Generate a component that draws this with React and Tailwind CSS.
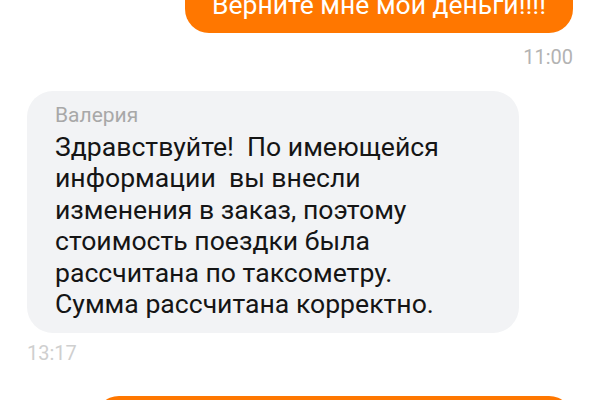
export default function App() {
  return (
    <div
      className="h-[400px] w-[600px] overflow-hidden bg-white px-[27px]"
      style={{ fontFamily: "Roboto, 'Noto Sans', sans-serif" }}
    >
      <div className="flex flex-col">
        <div className="-mt-[23px] self-end rounded-[24px] bg-[#ff7700] px-[27px] py-3 text-[26.5px] leading-[32px] text-white">
          Верните мне мои деньги!!!!
        </div>
        <div className="mt-3 self-end text-[20px] leading-[24px] text-[#b3b3b3]">11:00</div>

        <div className="mt-[22px] w-[492px] rounded-[26px] bg-[#f2f3f5] px-[28px] pt-[12px] pb-[13px]">
          <div className="text-[21px] leading-[24px] text-[#a8a8a8]">Валерия</div>
          <p className="mt-[3.5px] whitespace-pre-wrap text-[26.6px] leading-[31.6px] text-[#151515]">
            {"Здравствуйте!  По имеющейся\nинформации  вы внесли\nизменения в заказ, поэтому\nстоимость поездки была\nрассчитана по таксометру.\nСумма рассчитана корректно."}
          </p>
        </div>
        <div className="mt-2 text-[20px] leading-[24px] text-[#cfcfcf]">13:17</div>

        <div className="mt-[31px] h-[64px] w-[478px] self-end rounded-[24px] bg-[#ff7700]" />
      </div>
    </div>
  );
}
